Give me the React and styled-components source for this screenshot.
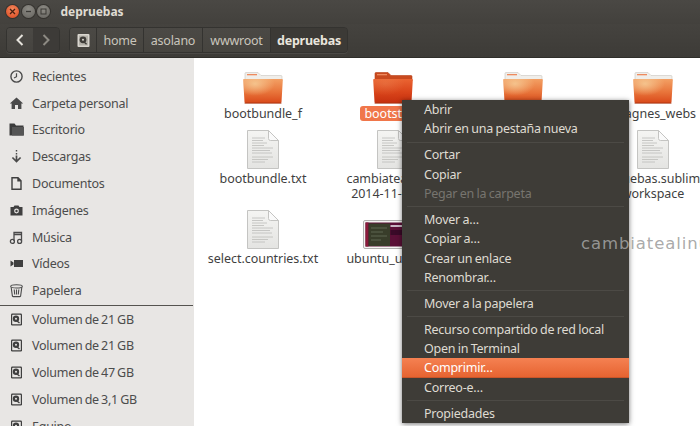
import React from "react";
import styled, { createGlobalStyle } from "styled-components";

const Global = createGlobalStyle`
  html, body { margin: 0; padding: 0; background: #fff; }
  #root { width: 700px; height: 426px; overflow: hidden; }
`;
const FONT = `"Noto Sans", "Open Sans", sans-serif`;

const Window = styled.div`
  position: relative; width: 700px; height: 426px; overflow: hidden;
  display: flex; flex-direction: column; font-family: ${FONT}; background: #fff;
`;
const TitleBar = styled.div`
  height: 24px; flex: none; display: flex; align-items: center; padding: 0 0 2px 6px; box-sizing: border-box;
  background: linear-gradient(#4a4844, #43413d);
`;
const WinBtn = styled.span`
  width: 13px; height: 13px; border-radius: 50%; margin-right: 2.5px; flex: none;
  display: flex; align-items: center; justify-content: center;
  background: ${p => p.$close ? "radial-gradient(circle at 50% 35%, #f58a5f, #d9441b)" : "radial-gradient(circle at 50% 30%, #8d8b85, #65635e)"};
  box-shadow: 0 0 0 1px rgba(30,28,25,.45);
`;
const Title = styled.span`
  margin-left: 8px; color: #dfdbd2; font-weight: 700; font-size: 12px; letter-spacing: -.05px;
`;
const Toolbar = styled.div`
  height: 34px; flex: none; display: flex; align-items: flex-start; padding: 3px 0 0 6px; gap: 9px;
  background: linear-gradient(#45433f, #3d3b37); box-sizing: border-box;
  border-bottom: 1px solid #2f2e2a;
`;
const Group = styled.div`
  display: flex; height: 26px; border: 1px solid #343330; border-radius: 4px; overflow: hidden;
  box-sizing: border-box; box-shadow: 0 1px 0 rgba(255,255,255,.07);
`;
const NavBtn = styled.div`
  width: 26px; display: flex; align-items: center; justify-content: center;
  background: ${p => p.$dim ? "#3d3b38" : "linear-gradient(#4b4945, #45433f)"};
`;
const Crumb = styled.div`
  display: flex; align-items: center; justify-content: center; width: ${p => p.$w}px; box-sizing: border-box;
  border-left: ${p => p.$first ? "none" : "1px solid #343330"};
  background: ${p => p.$active ? "#3c3a36" : "linear-gradient(#4b4945, #46443f)"};
  color: ${p => p.$active ? "#e9e5dd" : "#c9c5bc"};
  font-size: 12.5px; font-weight: ${p => p.$active ? 700 : 400}; letter-spacing: -.25px;
`;
const Main = styled.div`
  flex: 1; display: flex; min-height: 0;
`;
const Sidebar = styled.nav`
  width: 194px; flex: none; background: #e8e6e4; padding-top: 5px; box-sizing: border-box; overflow: hidden;
`;
const Row = styled.div`
  height: 26.8px; flex: none; display: flex; align-items: center; color: #4c4c4c; font-size: 12.5px;
  letter-spacing: -.25px; word-spacing: -.8px;
`;
const RowIcon = styled.span`
  width: 32px; flex: none; display: flex; justify-content: center; box-sizing: border-box;
`;
const Divider = styled.div`
  height: 1px; background: #55534f; width: 193px; margin-top: .5px;
`;
const Grid = styled.div`
  flex: 1; display: grid; grid-template-columns: repeat(4, 130px); grid-auto-rows: max-content;
  row-gap: 9px; padding: 13px 0 0 4px; align-content: start;
`;
const Cell = styled.div`
  display: flex; flex-direction: column; align-items: center; white-space: nowrap; min-width: 0;
`;
const Label = styled.div`
  margin-top: 2px; color: #3f3f3f; font-size: 12.5px; line-height: 15px; text-align: center;
  padding: 0 4px; border-radius: 3px; letter-spacing: -.04px;
  ${p => p.$selected ? "background: #f0764a; color: #fff;" : ""}
`;
const Menu = styled.div`
  position: absolute; left: 402px; top: 100px; width: 227px; height: 323px;
  background: #3e3c37; box-shadow: 0 1px 5px rgba(0,0,0,.55); font-size: 12.5px; color: #dfdbd2;
  letter-spacing: -.25px; word-spacing: -.5px;
`;
const MenuItem = styled.div`
  height: 19.3px; display: flex; align-items: center; padding-left: 22px; box-sizing: border-box;
  color: ${p => p.$disabled ? "#77756f" : p.$hot ? "#fff" : "#dfdbd2"};
  ${p => p.$hot ? "background: linear-gradient(#f58152, #e5622f); box-shadow: inset 0 -1px 0 #c9552a;" : ""}
`;
const MenuSep = styled.div`
  height: 1px; margin: 3px 5px 2.7px; background: #4c4a45;
`;
const Watermark = styled.div`
  position: absolute; left: 581px; top: 234px; font-family: "DejaVu Sans", sans-serif; font-size: 16.5px;
  letter-spacing: .9px; color: rgba(160,160,160,.9); white-space: nowrap;
`;
const ThumbSlot = styled.div`
  height: 39px; display: flex; align-items: flex-end;
`;

const C = "#4a4a4a";
const Clock = () => <svg width="15" height="15" viewBox="0 0 15 15"><circle cx="7.5" cy="7.5" r="5.6" fill="none" stroke={C} strokeWidth="1.4"/><path d="M7.5 4.2v3.5L5 9" fill="none" stroke={C} strokeWidth="1.2"/></svg>;
const Home = () => <svg width="15" height="15" viewBox="0 0 15 15"><path d="M.8 7.5 7.5 1.5l6.7 6H12.400V13H9V9H6v4H2.600V7.500z" fill={C}/></svg>;
const Desk = () => <svg width="15" height="15" viewBox="0 0 15 15"><path d="M.5 1.5h5l1.5 2h7.5v10H.5z" fill="#3c3c3c"/><rect x="3" y="5" width="12" height="8.5" fill="#555"/></svg>;
const Down = () => <svg width="15" height="15" viewBox="0 0 15 15"><path d="M7.5 1v1.4M7.5 4v1.4" stroke={C} strokeWidth="1.4"/><path d="M7.5 6.5V12M3.4 8.5l4.1 4.1 4.1-4.1" fill="none" stroke={C} strokeWidth="1.7"/></svg>;
const Doc = () => <svg width="15" height="15" viewBox="0 0 15 15"><path d="M3 1.8h6l3 3v8.4H3zM9 1.8v3h3" fill="none" stroke="#3f3f3f" strokeWidth="1.4"/></svg>;
const Camera = () => <svg width="15" height="15" viewBox="0 0 15 15"><path d="M1.5 4h3l1-1.6h4l1 1.6h3v8.5h-12z" fill="#3f3f3f"/><circle cx="7.5" cy="8" r="2.4" fill="#e8e6e4"/><circle cx="7.5" cy="8" r="1.2" fill="#3f3f3f"/></svg>;
const Music = () => <svg width="15" height="15" viewBox="0 0 15 15"><path d="M5 11V2.5h7.5V11M5 4.5h7.5" fill="none" stroke={C} strokeWidth="1.3"/><circle cx="3.4" cy="11.4" r="2" fill="none" stroke={C} strokeWidth="1.3"/><circle cx="10.6" cy="11.4" r="2" fill="none" stroke={C} strokeWidth="1.3"/></svg>;
const Video = () => <svg width="15" height="15" viewBox="0 0 15 15"><rect x="5" y="4" width="9" height="7" fill="#3f3f3f"/><path d="M1.5 4.5 4.5 6.5v2l-3 2z" fill="#3f3f3f"/></svg>;
const Trash = () => <svg width="15" height="15" viewBox="0 0 15 15"><ellipse cx="7.5" cy="3.4" rx="5.8" ry="1.6" fill="none" stroke={C} strokeWidth="1.1"/><path d="M2.2 4.5 3.4 13a1 1 0 0 0 1 .6h6.2a1 1 0 0 0 1-.6l1.2-8.5M5.2 6.5l.5 5M7.5 6.5v5M9.8 6.5l-.5 5" fill="none" stroke={C} strokeWidth="1.1"/></svg>;
const Disk = () => <svg width="15" height="15" viewBox="0 0 15 15"><rect x="2" y="1.5" width="11" height="12" rx="1.3" fill="#3f3f3f"/><rect x="3.2" y="2.7" width="8.6" height="9.6" rx=".6" fill="#e8e6e4"/><circle cx="7" cy="6.8" r="3.2" fill="#3f3f3f"/><circle cx="7" cy="6.8" r="1" fill="#e8e6e4"/><path d="M8 9l2.5 2" stroke="#3f3f3f" strokeWidth="1.4"/></svg>;
const DiskLight = () => <svg width="15" height="15" viewBox="0 0 15 15"><rect x="1.5" y="1" width="12" height="13" rx="1" fill="#d9d6cf"/><rect x="3" y="2.500" width="9" height="10" fill="#b5b2aa"/><circle cx="7" cy="6.800" r="3.400" fill="#3f3d39"/><circle cx="7" cy="6.800" r="1" fill="#d9d6cf"/><path d="M8 9l2.600 2.200" stroke="#3f3d39" strokeWidth="1.400"/></svg>;

const Folder = ({ id, selected }) => (
  <svg width="40" height="33" viewBox="0 0 40 33">
    <defs>
      <linearGradient id={`f${id}`} x1="0" y1="0" x2="0" y2="1">
        <stop offset="0" stopColor={selected ? "#ea6432" : "#f3a064"} />
        <stop offset=".55" stopColor={selected ? "#d9441a" : "#e8743a"} />
        <stop offset="1" stopColor={selected ? "#c5300f" : "#d9491a"} />
      </linearGradient>
      <radialGradient id={`g${id}`} cx=".3" cy=".2" r=".5">
        <stop offset="0" stopColor="#f6cf9a" stopOpacity={selected ? .15 : .8}/>
        <stop offset="1" stopColor="#f6cf9a" stopOpacity="0"/>
      </radialGradient>
    </defs>
    <path d="M2 9V2.5a1 1 0 0 1 1-1h12l3 3h20a1 1 0 0 1 1 1V10z" fill={selected ? "#c94a1f" : "#f0eeea"} stroke={selected ? "#b83f18" : "#c9c6c0"} strokeWidth=".6"/>
    <rect x="4" y="3" width="10" height="1.3" fill="#ee8a5e"/>
    <path d="M1 8h38a.8.8 0 0 1 .8.9L38.5 31a1.2 1.2 0 0 1-1.2 1H2.7a1.2 1.2 0 0 1-1.2-1L.2 8.9A.8.8 0 0 1 1 8z" fill={`url(#f${id})`}/>
    <path d="M1 8h38a.8.8 0 0 1 .8.9L38.5 31a1.2 1.2 0 0 1-1.2 1H2.7a1.2 1.2 0 0 1-1.2-1L.2 8.9A.8.8 0 0 1 1 8z" fill={`url(#g${id})`}/>
    <rect x="1.6" y="31.6" width="36.8" height="1" fill="#a8320f"/>
  </svg>
);
const TextFile = () => (
  <svg width="32" height="39" viewBox="0 0 32 39">
    <defs><linearGradient id="paper" x1="0" y1="0" x2="0" y2="1"><stop offset="0" stopColor="#f4f4f2"/><stop offset="1" stopColor="#e4e4e2"/></linearGradient></defs>
    <path d="M.5.5h21l10 10v28H.5z" fill="url(#paper)" stroke="#c4c4c2"/>
    <path d="M21.5.5v8a2 2 0 0 0 2 2h8z" fill="#fafafa" stroke="#c4c4c2"/>
    <path d="M5 8h13M5 10.500h11M5 13h15M5 15.500h12M5 18h21M5 20.500h18M5 23h20M5 27h21M5 29.500h16M5 32h13" stroke="#bcbcba" strokeWidth=".8"/>
  </svg>
);
const Thumb = () => (
  <svg width="60" height="29" viewBox="0 0 60 29">
    <rect x=".5" y=".5" width="59" height="28" rx="1.500" fill="#f4f4f2" stroke="#b0b0ae"/>
    <rect x="2.500" y="2.500" width="55" height="24" fill="#5b1037"/>
    <rect x="2.500" y="2.500" width="3" height="24" fill="#8a1a3a"/>
    <rect x="5.500" y="3.500" width="21.500" height="22.500" fill="#383d2a"/>
    <path d="M8 8h16M8 12h12M8 16h16M8 20h10" stroke="#5d6650" strokeWidth="1"/>
    <rect x="27.500" y="5" width="30" height="2" fill="#c9b7c4"/>
    <rect x="27.500" y="10" width="30" height="5" fill="#3a0a28"/>
  </svg>
);

const top = [
  ["Recientes", <Clock />], ["Carpeta personal", <Home />], ["Escritorio", <Desk />], ["Descargas", <Down />],
  ["Documentos", <Doc />], ["Imágenes", <Camera />], ["Música", <Music />], ["Vídeos", <Video />], ["Papelera", <Trash />],
];
const volumes = ["Volumen de 21 GB", "Volumen de 21 GB", "Volumen de 47 GB", "Volumen de 3,1 GB", "Equipo"];
const menu = [
  ["Abrir", "Abrir en una pestaña nueva"],
  ["Cortar", "Copiar", "!Pegar en la carpeta"],
  ["Mover a…", "Copiar a…", "Crear un enlace", "Renombrar…"],
  ["Mover a la papelera"],
  ["Recurso compartido de red local", "Open in Terminal", "*Comprimir…", "Correo-e…"],
  ["Propiedades"],
];

export default function App() {
  return (
    <Window>
      <Global />
      <TitleBar>
        <WinBtn $close><svg width="7" height="7" viewBox="0 0 7 7"><path d="M1 1l5 5M6 1 1 6" stroke="#4a2010" strokeWidth="1.300"/></svg></WinBtn>
        <WinBtn><svg width="7" height="7" viewBox="0 0 7 7"><path d="M1 3.500h5" stroke="#3a3935" strokeWidth="1.300"/></svg></WinBtn>
        <WinBtn><svg width="7" height="7" viewBox="0 0 7 7"><rect x="1" y="1" width="5" height="5" fill="none" stroke="#3a3935" strokeWidth="1"/></svg></WinBtn>
        <Title>depruebas</Title>
      </TitleBar>
      <Toolbar>
        <Group>
          <NavBtn><svg width="10" height="12" viewBox="0 0 10 12"><path d="M7.500 1 2.500 6l5 5" fill="none" stroke="#e6e3dc" strokeWidth="2"/></svg></NavBtn>
          <NavBtn $dim><svg width="10" height="12" viewBox="0 0 10 12"><path d="M2.500 1l5 5-5 5" fill="none" stroke="#8d8a83" strokeWidth="2"/></svg></NavBtn>
        </Group>
        <Group>
          <Crumb $first $w={26}><DiskLight /></Crumb>
          <Crumb $w={47}>home</Crumb>
          <Crumb $w={59}>asolano</Crumb>
          <Crumb $w={68}>wwwroot</Crumb>
          <Crumb $w={77} $active>depruebas</Crumb>
        </Group>
      </Toolbar>
      <Main>
        <Sidebar>
          {top.map(([t, i]) => <Row key={t}><RowIcon>{i}</RowIcon>{t}</Row>)}
          <Divider />
          {volumes.map((t, n) => <Row key={n}><RowIcon><Disk /></RowIcon>{t}</Row>)}
        </Sidebar>
        <Grid>
          <Cell><Folder id="a" /><Label>bootbundle_f</Label></Cell>
          <Cell><Folder id="b" selected /><Label $selected>bootstrap</Label></Cell>
          <Cell><Folder id="c" /></Cell>
          <Cell><Folder id="d" /><Label>imagnes_webs</Label></Cell>
          <Cell><TextFile /><Label>bootbundle.txt</Label></Cell>
          <Cell><TextFile /><Label>cambiatealinux-<br />2014-11-04.txt</Label></Cell>
          <Cell />
          <Cell><TextFile /><Label>depruebas.sublime-<br />workspace</Label></Cell>
          <Cell><TextFile /><Label>select.countries.txt</Label></Cell>
          <Cell><ThumbSlot><Thumb /></ThumbSlot><Label>ubuntu_uni.png</Label></Cell>
        </Grid>
      </Main>
      <Menu>
        {menu.map((g, i) => (
          <React.Fragment key={i}>
            {i > 0 && <MenuSep />}
            {g.map(t => {
              const d = t[0] === "!", h = t[0] === "*";
              return <MenuItem key={t} $disabled={d} $hot={h}>{d || h ? t.slice(1) : t}</MenuItem>;
            })}
          </React.Fragment>
        ))}
      </Menu>
      <Watermark>cambiatealinux.com</Watermark>
    </Window>
  );
}
